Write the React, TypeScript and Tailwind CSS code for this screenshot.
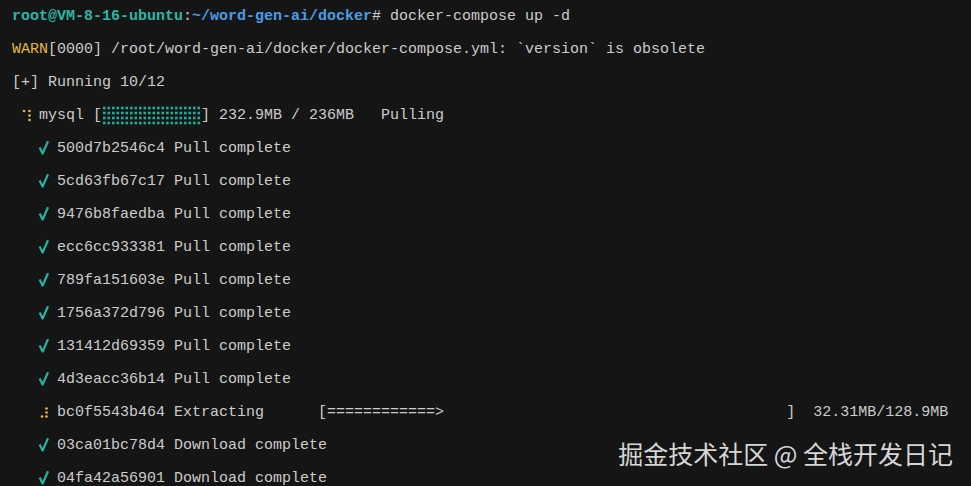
const hashes = [
  "500d7b2546c4",
  "5cd63fb67c17",
  "9476b8faedba",
  "ecc6cc933381",
  "789fa151603e",
  "1756a372d796",
  "131412d69359",
  "4d3eacc36b14",
];

// one 9px terminal cell holding a drawn glyph
function Check() {
  return (
    <svg width={9} height={33} className="inline-block align-top overflow-visible">
      <path d="M0.6 15.6 L3.6 21.6 L9 9.2" fill="none" stroke="#27b3a3" strokeWidth={2.2} strokeLinejoin="round" />
    </svg>
  );
}

function Spinner({ dots }: { dots: [number, number][] }) {
  return (
    <svg width={9} height={33} className="inline-block align-top overflow-visible">
      {dots.map(([x, y], i) => (
        <circle key={i} cx={x} cy={y} r={1.35} fill="#e5b546" />
      ))}
    </svg>
  );
}

function Bar() {
  const cols = Array.from({ length: 22 }, (_, i) => i);
  const rows = [9, 14, 19, 24];
  return (
    <svg width={99} height={33} className="inline-block align-top">
      {rows.map((y) =>
        cols.map((c) => (
          <rect key={`${y}-${c}`} x={1 + c * 4.5} y={y - 1.3} width={2.6} height={2.6} fill="#1fae9c" />
        ))
      )}
    </svg>
  );
}

export default function App() {
  return (
    <div className="relative w-[971px] h-[486px] overflow-hidden bg-[#151515] text-[#cccccc]">
      <div
        className="flex flex-col -mt-[0.5px] pl-[12px] text-[15px] leading-[33px] whitespace-pre"
        style={{ fontFamily: '"Liberation Mono", "DejaVu Sans Mono", monospace' }}
      >
        <div className="h-[33px]">
          <span className="font-bold text-[#2bb8a5]">root@VM-8-16-ubuntu</span>
          <span>:</span>
          <span className="font-bold text-[#4a9de6]">~/word-gen-ai/docker</span>
          <span># docker-compose up -d</span>
        </div>
        <div className="h-[33px]">
          <span className="text-[#e2b543]">WARN</span>
          [0000] /root/word-gen-ai/docker/docker-compose.yml: `version` is obsolete
        </div>
        <div className="h-[33px]">[+] Running 10/12</div>
        <div className="h-[33px]">
          {" "}
          <Spinner dots={[[3, 12], [8.5, 12], [8.5, 16.5], [8.5, 21]]} />
          {" mysql ["}
          <Bar />
          {"] 232.9MB / 236MB   Pulling"}
        </div>
        {hashes.map((h) => (
          <div key={h} className="h-[33px]">
            {"   "}
            <Check />
            {" " + h + " Pull complete"}
          </div>
        ))}
        <div className="h-[33px]">
          {"   "}
          <Spinner dots={[[3, 20.5], [7.5, 12.5], [7.5, 16.5], [7.5, 20.5]]} />
          {" bc0f5543b464 Extracting      [============>                                      ]  32.31MB/128.9MB"}
        </div>
        <div className="h-[33px]">
          {"   "}
          <Check />
          {" 03ca01bc78d4 Download complete"}
        </div>
        <div className="h-[33px]">
          {"   "}
          <Check />
          {" 04fa42a56901 Download complete"}
        </div>
      </div>
      <div
        className="absolute right-[18px] top-[438px] text-[25px] leading-[30px] text-[#d6d6d6] whitespace-pre"
        style={{ fontFamily: '"Noto Sans CJK SC", "Noto Sans", sans-serif' }}
      >
        掘金技术社区 @ 全栈开发日记
      </div>
    </div>
  );
}
